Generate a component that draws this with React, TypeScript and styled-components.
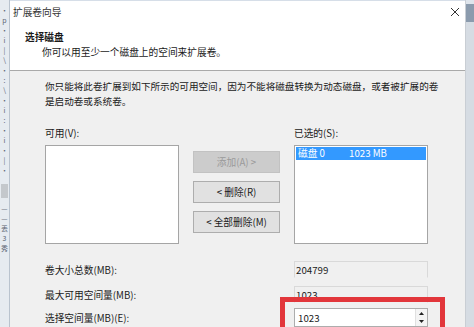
import React from "react";
import styled, { createGlobalStyle } from "styled-components";

const GlobalStyle = createGlobalStyle`
  html, body {
    margin: 0;
    padding: 0;
    background: #dfe5ec;
  }
  body {
    font-family: "Noto Sans CJK SC", "Noto Sans", sans-serif;
    font-size: 9.7px;
    color: #1a1a1a;
  }
`;

const Screen = styled.div`
  width: 474px;
  height: 327px;
  display: flex;
  overflow: hidden;
`;

const BackWindow = styled.div`
  width: 9px;
  flex-shrink: 0;
  background: #e6ebf0;
  border-right: 1px solid #b9c3ce;
  display: flex;
  flex-direction: column;
  align-items: center;
  padding-top: 6px;
  gap: 2px;
  color: #5a6470;
  font-size: 7px;
  line-height: 8px;
  overflow: hidden;
`;

const BackBlock = styled.div`
  width: 7px;
  height: 14px;
  background: #c4c8cc;
  margin: 8px 0 4px;
`;

const RightEdge = styled.div`
  width: 8px;
  flex-shrink: 0;
  display: flex;
  flex-direction: column;
  border-left: 1px solid #c9ced4;
`;

const RightCap = styled.div`
  height: 18px;
  margin-top: 4px;
  background: #8b9bad;
`;

const RightRest = styled.div`
  flex: 1;
  background: #d6dce3;
`;

const Dialog = styled.div`
  flex: 1;
  min-width: 0;
  display: flex;
  flex-direction: column;
  background: #f0f0f0;
`;

const TitleBar = styled.div`
  height: 26px;
  background: #fff;
  display: flex;
  align-items: center;
  justify-content: space-between;
  padding: 0 5px 0 3px;
  border-top: 1px solid #d6dee8;
  box-sizing: border-box;
`;

const Title = styled.span`
  color: #333;
`;

const Header = styled.div`
  height: 45px;
  background: #fff;
  border-bottom: 1px solid #a9a9a9;
  padding: 7px 0 0 15px;
  display: flex;
  flex-direction: column;
  line-height: 15px;
`;

const HeaderTitle = styled.div`
  font-weight: bold;
`;

const HeaderSub = styled.div`
  padding-left: 17px;
`;

const Body = styled.div`
  flex: 1;
  padding: 8px 0 0 35px;
`;

const Para = styled.p`
  margin: 0;
  font-size: 9.6px;
  line-height: 15px;
  white-space: nowrap;
`;

const Picker = styled.div`
  display: grid;
  grid-template-columns: 134px 87px 134px;
  column-gap: 14px;
  margin-top: 17px;
`;

const Column = styled.div`
  display: flex;
  flex-direction: column;
`;

const Label = styled.div`
  line-height: 14px;
  height: 14px;
  margin-bottom: 5px;
`;

const ListBox = styled.div`
  height: 97px;
  background: #fff;
  border: 1px solid #a5a5a5;
`;

const ListRow = styled.div`
  height: 13px;
  background: #3399ff;
  color: #fff;
  display: flex;
  align-items: center;
  padding-left: 2px;
  margin: 1px 1px 0;
  line-height: 13px;
`;

const RowCell = styled.span<{ $w?: number }>`
  width: ${(p) => (p.$w ? `${p.$w}px` : "auto")};
`;

const Buttons = styled.div`
  display: flex;
  flex-direction: column;
  gap: 8px;
  padding-top: 25px;
`;

const Button = styled.div<{ $disabled?: boolean }>`
  height: 22px;
  box-sizing: border-box;
  display: flex;
  align-items: center;
  justify-content: center;
  background: ${(p) => (p.$disabled ? "#cccccc" : "#e1e1e1")};
  border: 1px solid ${(p) => (p.$disabled ? "#c2c2c2" : "#adadad")};
  color: ${(p) => (p.$disabled ? "#9a9a9a" : "#1a1a1a")};
`;

const Fields = styled.div`
  margin-top: 17px;
  display: flex;
  flex-direction: column;
`;

const FieldRow = styled.div<{ $top: number }>`
  display: grid;
  grid-template-columns: 249px 134px;
  align-items: center;
  margin-top: ${(p) => p.$top}px;
`;

const ReadOnly = styled.div`
  height: 17px;
  box-sizing: border-box;
  border: 1px solid #d9d9d9;
  border-bottom-color: #f0f0f0;
  display: flex;
  align-items: center;
  padding-left: 1px;
`;

const SpinCell = styled.div`
  position: relative;
`;

const SpinBox = styled.div`
  position: relative;
  z-index: 1;
  height: 19px;
  box-sizing: border-box;
  background: #fff;
  border: 1px solid #adadad;
  display: flex;
  align-items: center;
  justify-content: space-between;
  padding-left: 3px;
`;

const SpinArrows = styled.div`
  width: 11px;
  align-self: stretch;
  display: flex;
  flex-direction: column;
  border-left: 1px solid #e0e0e0;
`;

const Arrow = styled.div`
  flex: 1;
  display: flex;
  align-items: center;
  justify-content: center;
  background: #f4f4f4;
`;

const Highlight = styled.div`
  position: absolute;
  left: -14px;
  top: -11px;
  width: 165px;
  height: 40px;
  box-sizing: border-box;
  border: 5px solid #e2363b;
`;

const backChars = ["•", "p", "•", "i", "|", "\\", "•", ":", "\\", "•", "i", ":", "•", "i", "•", "|", "•"];

export default function App() {
  return (
    <Screen>
      <GlobalStyle />
      <BackWindow>
        {backChars.map((c, i) => (
          <span key={i}>{c}</span>
        ))}
        <BackBlock />
        <span>—</span>
        <span>—</span>
        <span>丢</span>
        <span>3</span>
        <span>秀</span>
      </BackWindow>
      <Dialog>
        <TitleBar>
          <Title>扩展卷向导</Title>
          <svg width="10" height="10" viewBox="0 0 10 10">
            <path d="M1 1 L9 9 M9 1 L1 9" stroke="#333" strokeWidth="1" />
          </svg>
        </TitleBar>
        <Header>
          <HeaderTitle>选择磁盘</HeaderTitle>
          <HeaderSub>你可以用至少一个磁盘上的空间来扩展卷。</HeaderSub>
        </Header>
        <Body>
          <Para>
            你只能将此卷扩展到如下所示的可用空间，因为不能将磁盘转换为动态磁盘，或者被扩展的卷
            <br />
            是启动卷或系统卷。
          </Para>
          <Picker>
            <Column>
              <Label>可用(V):</Label>
              <ListBox />
            </Column>
            <Buttons>
              <Button $disabled>添加(A) &gt;</Button>
              <Button>&lt; 删除(R)</Button>
              <Button>&lt; 全部删除(M)</Button>
            </Buttons>
            <Column>
              <Label>已选的(S):</Label>
              <ListBox>
                <ListRow>
                  <RowCell $w={51}>磁盘 0</RowCell>
                  <RowCell>1023 MB</RowCell>
                </ListRow>
              </ListBox>
            </Column>
          </Picker>
          <Fields>
            <FieldRow $top={0}>
              <span>卷大小总数(MB):</span>
              <ReadOnly>204799</ReadOnly>
            </FieldRow>
            <FieldRow $top={8}>
              <span>最大可用空间量(MB):</span>
              <ReadOnly>1023</ReadOnly>
            </FieldRow>
            <FieldRow $top={5}>
              <span>选择空间量(MB)(E):</span>
              <SpinCell>
                <Highlight />
                <SpinBox>
                  <span>1023</span>
                  <SpinArrows>
                    <Arrow>
                      <svg width="5" height="3" viewBox="0 0 5 3">
                        <path d="M0 3 L2.5 0 L5 3 Z" fill="#222" />
                      </svg>
                    </Arrow>
                    <Arrow>
                      <svg width="5" height="3" viewBox="0 0 5 3">
                        <path d="M0 0 L2.5 3 L5 0 Z" fill="#222" />
                      </svg>
                    </Arrow>
                  </SpinArrows>
                </SpinBox>
              </SpinCell>
            </FieldRow>
          </Fields>
        </Body>
      </Dialog>
      <RightEdge>
        <RightCap />
        <RightRest />
      </RightEdge>
    </Screen>
  );
}
